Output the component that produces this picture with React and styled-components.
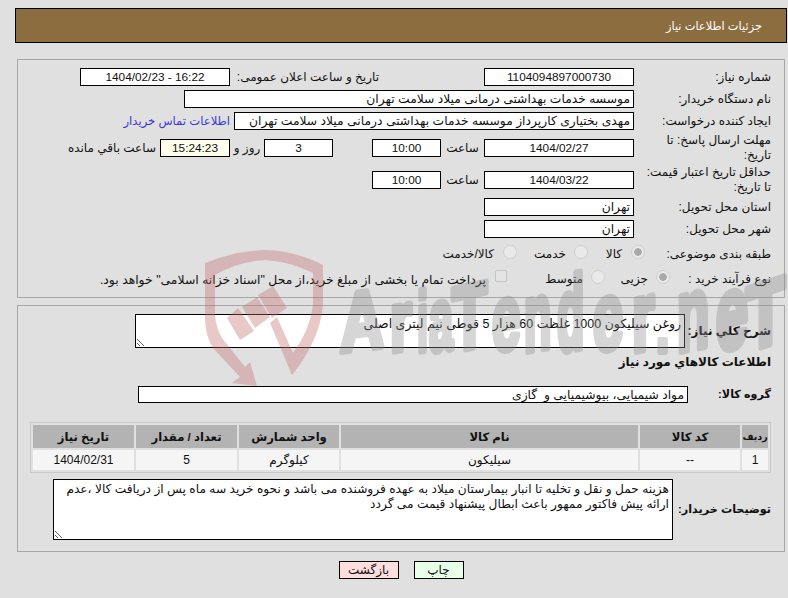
import React from "react";
import styled, { createGlobalStyle } from "styled-components";

const Global = createGlobalStyle`
  html, body { margin: 0; background: #e0e0e0; }
  body { font-family: "Liberation Sans", "DejaVu Sans", sans-serif; font-size: 12px; color: #111; direction: rtl; }
`;
const Page = styled.div`
  position: relative; width: 788px; height: 598px; box-sizing: border-box;
  padding: 8px 1px 0 15px; overflow: hidden;
`;
const Header = styled.header`
  height: 35px; box-sizing: border-box; border: 1px solid #000; background: #8c6d3f; color: #fff;
  display: flex; align-items: center; padding-right: 24px; font-size: 11.4px;
`;
const Panel = styled.section`
  box-sizing: border-box; margin: ${p => p.$top}px 2px 0; height: ${p => p.$h}px;
  border: 1px solid #a6a6a6; padding: 8px 13px 0 0;
`;
const Row = styled.div`
  display: flex; align-items: center; height: ${p => p.$h || 18}px; margin-top: ${p => p.$top || 0}px;
`;
const Label = styled.div`
  flex: none; width: ${p => p.$w ? p.$w + "px" : "137px"}; line-height: 15px; font-weight: ${p => p.$bold ? 700 : 400};
  font-size: ${p => p.$size || 12}px; white-space: nowrap;
`;
const WrapLabel = styled(Label)`
  white-space: normal; padding-left: 12px; box-sizing: border-box;
`;
const Field = styled.div`
  flex: none; box-sizing: border-box; width: ${p => p.$w || 150}px; height: ${p => p.$h || 18}px;
  border: 1px solid #000; background: ${p => p.$bg || "#fff"};
  padding: 0 3px; line-height: 16px; text-align: ${p => p.$center ? "center" : "right"};
  font-size: ${p => p.$center ? 11.8 : 12.3}px; white-space: pre; overflow: hidden;
`;
const Text = styled.span`
  flex: none; width: ${p => p.$w}px; margin-right: ${p => p.$mr || 0}px; white-space: nowrap;
  font-size: ${p => p.$size || 12}px; text-align: ${p => p.$center ? "center" : "right"};
`;
const Contact = styled.a`
  flex: none; margin-right: 4px; color: #3a3ad8; text-decoration: none; font-size: 11.6px;
`;
const Spacer = styled.span`
  flex: none; width: ${p => p.$w}px;
`;
const Radio = styled.input.attrs({ type: "radio", disabled: true })`
  appearance: none; flex: none; box-sizing: border-box; width: 14px; height: 14px; margin: 0 0 0 ${p => p.$gap || 8}px;
  margin-right: ${p => p.$mr || 0}px; border-radius: 50%; border: 1px solid #cfcfcf;
  background: #e9e9e9; transform: translateY(-2px);
  &:checked { background: radial-gradient(circle, #a8a8a8 0 3.5px, #e9e9e9 4px); }
`;
const Check = styled.input.attrs({ type: "checkbox", disabled: true })`
  appearance: none; flex: none; box-sizing: border-box; width: 12px; height: 12px;
  margin: 0 ${p => p.$mr || 0}px 0 9px; border: 1px solid #c4c4c4; border-radius: 2px;
  background: #e4e4e4; transform: translateY(-3px);
`;
const Area = styled.textarea`
  flex: none; box-sizing: border-box; display: block; width: ${p => p.$w}px; height: ${p => p.$h}px; margin: 0;
  border: 1px solid #000; border-radius: 0; outline: 0; background: #fff; color: #111; padding: 2px 3px;
  font-family: inherit; font-size: ${p => p.$size}px; line-height: 15px; direction: rtl; overflow: hidden;
`;
const Table = styled.table`
  box-sizing: border-box; width: 741px; margin: 19px 0 0 0; border: 1px solid #c8c8c8;
  border-spacing: 2px; border-collapse: separate; table-layout: fixed; font-size: 12px;
`;
const Th = styled.th`
  height: 23px; padding: 0; background: #b3b3b3; width: ${p => p.$w ? p.$w + "px" : "auto"};
  font-weight: 700; font-size: ${p => p.$size || 11.6}px; text-align: center; white-space: nowrap;
`;
const Td = styled.td`
  height: 20px; padding: 0; background: #f5f5f5; text-align: center;
`;
const Buttons = styled.div`
  display: flex; justify-content: center; gap: 15px; margin-top: 9px;
`;
const Button = styled.button`
  box-sizing: border-box; width: ${p => p.$w}px; height: 18px; padding: 0; border: 1px solid #000; border-radius: 0;
  background: ${p => p.$bg}; color: #111; font: inherit; line-height: 14px;
`;
const Watermark = styled.svg`
  position: absolute; left: 0; top: 0; width: 788px; height: 386px; pointer-events: none; z-index: 5;
`;

const mark = [
  ["A", 340, 0.76, 1.04, -7], ["r", 390, 0.7, 1.06, -8], ["i", 417, 0.5, 1.06, -8], ["a", 429, 0.54, 1.12, -8],
  ["T", 452, 0.72, 1.14, -12], ["e", 492, 0.64, 1.16, -10], ["n", 524, 0.56, 1.2, -10], ["d", 557, 0.56, 1.3, -10],
  ["e", 593, 0.68, 1.2, -10], ["r", 632, 0.72, 1.22, -10], [".", 656, 0.6, 1.0, 0], ["n", 677, 0.66, 1.28, -12],
  ["e", 716, 0.72, 1.3, -14], ["T", 746, 0.8, 1.14, -18],
];

function Logo() {
  return (
    <Watermark viewBox="0 0 788 386">
      <g opacity="0.36" fill="#c46a6a">
        <path d="M205 263 Q235 251 265 250 Q296 251 323 265 L323 305 Q320 340 292 375 L270 323 L277 317 L293 353 Q310 330 313 305 L313 273 Q288 261 265 260 Q240 261 215 275 L215 315 Q216 328 222 338 L245 367 L250 362 L257 386 L232 383 L240 377 L213 348 Q205 335 205 318 Z" />
        <path d="M227 318 L238 308 L254 331 L240 340 Z" />
        <path d="M242 307 L257 297 L270 317 L255 328 Z" />
        <path d="M258 295 L273 286 L287 308 L272 318 Z" />
      </g>
      <g opacity="0.36" fill="#8f8f8f" stroke="#8f8f8f" strokeWidth="6" strokeLinejoin="round" fontFamily="'Liberation Sans', sans-serif" fontWeight="700" fontSize="80" direction="ltr">
        {mark.map(([c, x, sx, sy, sk], i) => (
          <text key={i} transform={`translate(${x} 352) skewY(${sk}) scale(${sx} ${sy})`}>{c}</text>
        ))}
      </g>
    </Watermark>
  );
}

export default function App() {
  return (
    <Page>
      <Global />
      <Logo />
      <Header>جزئیات اطلاعات نیاز</Header>
      <Panel $top={16} $h={239}>
        <Row>
          <Label>شماره نیاز:</Label>
          <Field $center>1104094897000730</Field>
          <Text $w={145} $mr={105}>تاریخ و ساعت اعلان عمومی:</Text>
          <Spacer $w={4} />
          <Field $center>16:22 - 1404/02/23</Field>
        </Row>
        <Row $top={4}>
          <Label>نام دستگاه خریدار:</Label>
          <Field $w={450}>موسسه خدمات بهداشتی درمانی میلاد سلامت تهران</Field>
        </Row>
        <Row $top={4}>
          <Label>ایجاد کننده درخواست:</Label>
          <Field $w={400}>مهدی بختیاری کارپرداز موسسه خدمات بهداشتی درمانی میلاد سلامت تهران</Field>
          <Contact href="#">اطلاعات تماس خریدار</Contact>
        </Row>
        <Row $top={9}>
          <WrapLabel>مهلت ارسال پاسخ: تا تاریخ:</WrapLabel>
          <Field $center>1404/02/27</Field>
          <Text $w={43} $center>ساعت</Text>
          <Field $w={69} $center>10:00</Field>
          <Spacer $w={39} />
          <Field $w={69} $center>3</Field>
          <Text $w={34} $center>روز و</Text>
          <Field $w={70} $center $bg="#ffffec">15:24:23</Field>
          <Text $w={94} $mr={4}>ساعت باقي مانده</Text>
        </Row>
        <Row $top={14}>
          <WrapLabel>حداقل تاریخ اعتبار قیمت: تا تاریخ:</WrapLabel>
          <Field $center>1404/03/22</Field>
          <Text $w={43} $center>ساعت</Text>
          <Field $w={69} $center>10:00</Field>
        </Row>
        <Row $top={9}>
          <Label>استان محل تحویل:</Label>
          <Field>تهران</Field>
        </Row>
        <Row $top={4}>
          <Label>شهر محل تحویل:</Label>
          <Field>تهران</Field>
        </Row>
        <Row $top={7}>
          <Label $w={126}>طبقه بندی موضوعی:</Label>
          <Radio name="a" defaultChecked $gap={9} />
          <Text $w={16}>کالا</Text>
          <Radio name="a" $mr={18} />
          <Text $w={32}>خدمت</Text>
          <Radio name="a" $mr={17} $gap={9} />
          <Text $w={52}>کالا/خدمت</Text>
        </Row>
        <Row $top={7}>
          <Label $w={101}>نوع فرآیند خرید :</Label>
          <Radio name="b" defaultChecked />
          <Text $w={28}>جزیی</Text>
          <Radio name="b" $mr={15} />
          <Text $w={36}>متوسط</Text>
          <Check $mr={40} />
          <Text $w={385} $size={12.4}>پرداخت تمام یا بخشی از مبلغ خرید،از محل "اسناد خزانه اسلامی" خواهد بود.</Text>
        </Row>
      </Panel>
      <Panel $top={7} $h={247}>
        <Row $h={34}>
          <Label $w={86} $bold>شرح كلي نياز:</Label>
          <Area $w={550} $h={34} $size={12.5} readOnly defaultValue="روغن سیلیکون 1000 غلظت 60 هزار 5 قوطی نیم لیتری اصلی" />
        </Row>
        <Row $top={5}>
          <Label $w={150} $bold>اطلاعات كالاهاي مورد نياز</Label>
        </Row>
        <Row $top={15} $h={17}>
          <Label $w={83} $bold $size={11.2}>گروه کالا:</Label>
          <Field $w={550} $h={17}>{"مواد شیمیایی، بیوشیمیایی و  گازی"}</Field>
        </Row>
        <Table>
          <thead>
            <tr>
              <Th $w={26} $size={9.5}>ردیف</Th>
              <Th $w={100}>کد کالا</Th>
              <Th>نام کالا</Th>
              <Th $w={100}>واحد شمارش</Th>
              <Th $w={101}>تعداد / مقدار</Th>
              <Th $w={101}>تاریخ نیاز</Th>
            </tr>
          </thead>
          <tbody>
            <tr>
              <Td>1</Td>
              <Td>--</Td>
              <Td>سیلیکون</Td>
              <Td>کیلوگرم</Td>
              <Td>5</Td>
              <Td>1404/02/31</Td>
            </tr>
          </tbody>
        </Table>
        <Row $top={6} $h={61}>
          <Label $w={98} $bold $size={11.2}>توضیحات خریدار:</Label>
          <Area $w={620} $h={61} $size={12.2} readOnly defaultValue="هزینه حمل و نقل و تخلیه تا انبار بیمارستان میلاد به عهده فروشنده می باشد و نحوه خرید سه ماه پس از دریافت کالا ،عدم ارائه پیش فاکتور ممهور باعث ابطال پیشنهاد قیمت می گردد" />
        </Row>
      </Panel>
      <Buttons>
        <Button $w={50} $bg="#e8ffe8">چاپ</Button>
        <Button $w={60} $bg="#ffdede">بازگشت</Button>
      </Buttons>
    </Page>
  );
}
